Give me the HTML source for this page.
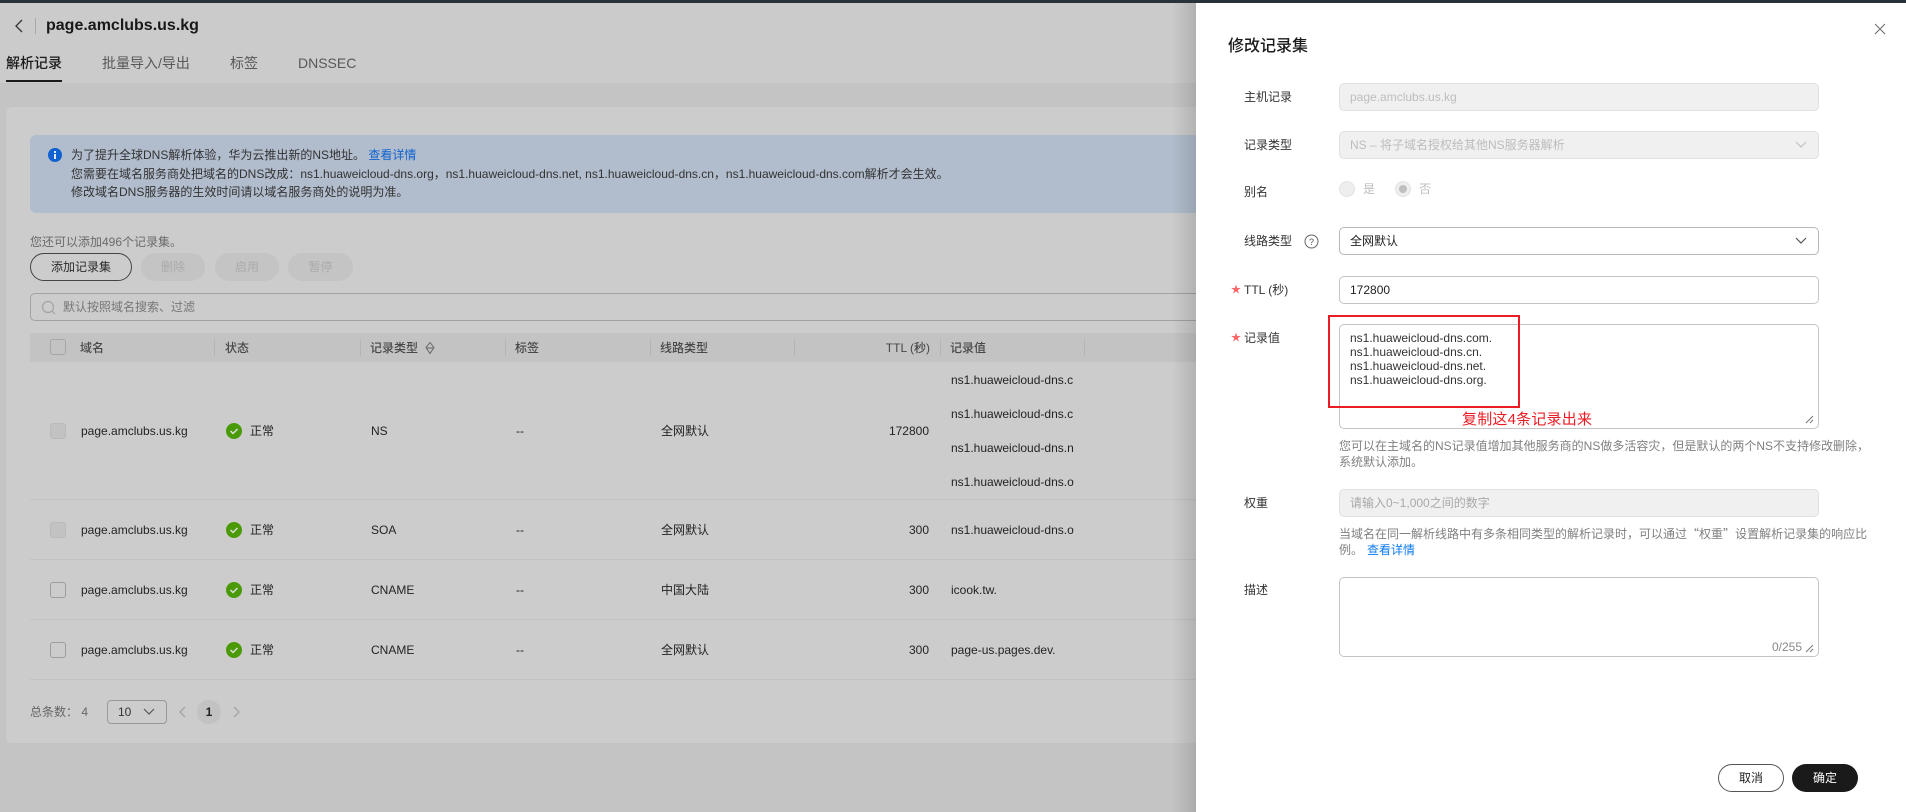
<!DOCTYPE html>
<html lang="zh"><head><meta charset="utf-8"><title>修改记录集</title>
<style>
html,body{margin:0;padding:0}
body{width:1906px;height:812px;position:relative;overflow:hidden;background:#c4c4c4;font:12px "Liberation Sans","Noto Sans CJK SC",sans-serif;color:#232323}
.a{position:absolute;box-sizing:border-box}
.t{position:absolute;white-space:nowrap;line-height:20px}
.h{color:#484848;font-weight:500}
.sep{position:absolute;top:339px;width:1px;height:17px;background:#b4b4b4}
.cb{position:absolute;left:50px;width:16px;height:16px;border:1px solid #9c9c9c;border-radius:3px;box-sizing:border-box}
.dis{background:#c2c2c2;border-color:#bababa}
.rl{position:absolute;left:30px;width:1166px;height:1px;background:#c2c2c2}
.st{position:absolute;left:226px;width:16px;height:16px}
.btn{position:absolute;top:253px;height:28px;border-radius:14px;background:#c4c4c4;color:#aaa;text-align:center;line-height:28px}
.l{color:#333}
.in{position:absolute;left:1339px;width:480px;border:1px solid #c2c2c2;border-radius:5px;box-sizing:border-box;background:#fff}
.off{background:#f0f0f0;border-color:#e0e0e0}
.help{color:#808080}
.rad{position:absolute;top:181px;width:16px;height:16px;border-radius:50%;background:#eee;border:1px solid #e3e3e3;box-sizing:border-box}
.star{position:absolute;left:1231px;white-space:nowrap;line-height:20px;font-size:10px;color:#f66}
.q{font-family:"Noto Sans CJK SC",sans-serif}
</style></head><body>
<div class="a" style="left:0;top:83px;width:1196px;height:24px;background:#c4c4c4"></div>
<div class="a" style="left:0;top:0;width:1196px;height:83px;background:#cbcbcb"></div>
<div class="a" style="left:0;top:0;width:1906px;height:3px;background:#29313a;z-index:9"></div>

<svg class="a" style="left:13px;top:18px" width="12" height="16" viewBox="0 0 12 16"><path d="M9 2L3 8l6 6" fill="none" stroke="#333" stroke-width="1.3"/></svg>
<div class="a" style="left:35px;top:18px;width:1px;height:16px;background:#a8a8a8"></div>
<div class="t" style="left:46px;top:16px;font-size:16px;font-weight:700;color:#191919">page.amclubs.us.kg</div>
<div class="t" style="left:6px;top:53px;font-size:14px;color:#1a1a1a;font-weight:500">解析记录</div>
<div class="t" style="left:102px;top:53px;font-size:14px;color:#585858">批量导入/导出</div>
<div class="t" style="left:230px;top:53px;font-size:14px;color:#585858">标签</div>
<div class="t" style="left:298px;top:53px;font-size:14px;color:#585858">DNSSEC</div>
<div class="a" style="left:6px;top:80px;width:56px;height:2px;background:#1a1a1a"></div>

<div class="a" style="left:6px;top:107px;width:1200px;height:636px;background:#cccccc;border-radius:6px"></div>
<div class="a" style="left:30px;top:135px;width:1170px;height:78px;background:#b1bccc;border-radius:6px"></div>
<svg class="a" style="left:48px;top:148px" width="14" height="14" viewBox="0 0 14 14"><circle cx="7" cy="7" r="7" fill="#0f62d0"/><rect x="6" y="6" width="2" height="5" fill="#dfe6f0"/><rect x="6" y="3" width="2" height="2" fill="#dfe6f0"/></svg>
<div class="t" style="left:71px;top:145px;color:#333">为了提升全球DNS解析体验，华为云推出新的NS地址。 <span style="color:#0f62d0">查看详情</span></div>
<div class="t" style="left:71px;top:164px;color:#333">您需要在域名服务商处把域名的DNS改成：ns1.huaweicloud-dns.org，ns1.huaweicloud-dns.net, ns1.huaweicloud-dns.cn，ns1.huaweicloud-dns.com解析才会生效。</div>
<div class="t" style="left:71px;top:182px;color:#333">修改域名DNS服务器的生效时间请以域名服务商处的说明为准。</div>

<div class="t" style="left:30px;top:232px;color:#6a6a6a">您还可以添加496个记录集。</div>
<div class="a" style="left:30px;top:253px;width:102px;height:28px;border:1px solid #444;border-radius:14px;text-align:center;line-height:26px;color:#2a2a2a">添加记录集</div>
<div class="btn" style="left:141px;width:64px">删除</div>
<div class="btn" style="left:215px;width:64px">启用</div>
<div class="btn" style="left:288px;width:65px">暂停</div>

<div class="a" style="left:30px;top:293px;width:1200px;height:28px;border:1px solid #a2a2a2;border-radius:5px"></div>
<svg class="a" style="left:41px;top:300px" width="16" height="16" viewBox="0 0 16 16"><circle cx="7" cy="7" r="5.500" fill="none" stroke="#a4a4a4" stroke-width="1.2"/><path d="M11 11l3 3" stroke="#a4a4a4" stroke-width="1.2"/></svg>
<div class="t" style="left:63px;top:297px;color:#777">默认按照域名搜索、过滤</div>

<div class="a" style="left:30px;top:333px;width:1166px;height:29px;background:#c3c3c3"></div>
<div class="cb" style="top:339px;border-color:#a6a6a6"></div>
<div class="t h" style="left:80px;top:338px">域名</div><div class="sep" style="left:214px"></div>
<div class="t h" style="left:225px;top:338px">状态</div><div class="sep" style="left:360px"></div>
<div class="t h" style="left:370px;top:338px">记录类型</div>
<svg class="a" style="left:424px;top:341px" width="12" height="14" viewBox="0 0 12 14"><path d="M6 1.500L10 6.500 6 12.500 2 6.500Z" fill="none" stroke="#666"/><path d="M3 7h6" stroke="#666"/></svg>
<div class="sep" style="left:505px"></div>
<div class="t h" style="left:515px;top:338px">标签</div><div class="sep" style="left:650px"></div>
<div class="t h" style="left:660px;top:338px">线路类型</div><div class="sep" style="left:794px"></div>
<div class="t h" style="right:976px;top:338px">TTL (秒)</div><div class="sep" style="left:940px"></div>
<div class="t h" style="left:950px;top:338px">记录值</div><div class="sep" style="left:1084px"></div>

<div class="rl" style="top:499px"></div><div class="rl" style="top:559px"></div><div class="rl" style="top:619px"></div><div class="rl" style="top:679px"></div>

<div class="cb dis" style="top:423px"></div><div class="cb dis" style="top:522px"></div><div class="cb" style="top:582px"></div><div class="cb" style="top:642px"></div>

<div class="t" style="left:81px;top:421px">page.amclubs.us.kg</div>
<svg class="st" style="top:423px" viewBox="0 0 16 16"><circle cx="8" cy="8" r="8" fill="#4a9a08"/><path d="M4.500 8l2.500 2.500 4.500-4.500" fill="none" stroke="#ddd" stroke-width="1.5"/></svg>
<div class="t" style="left:250px;top:421px">正常</div>
<div class="t" style="left:371px;top:421px">NS</div>
<div class="t" style="left:516px;top:421px">--</div>
<div class="t" style="left:661px;top:421px">全网默认</div>
<div class="t" style="right:977px;top:421px">172800</div>
<div class="t" style="left:951px;top:370px">ns1.huaweicloud-dns.c</div>
<div class="t" style="left:951px;top:404px">ns1.huaweicloud-dns.c</div>
<div class="t" style="left:951px;top:438px">ns1.huaweicloud-dns.n</div>
<div class="t" style="left:951px;top:472px">ns1.huaweicloud-dns.o</div>

<div class="t" style="left:81px;top:520px">page.amclubs.us.kg</div>
<svg class="st" style="top:522px" viewBox="0 0 16 16"><circle cx="8" cy="8" r="8" fill="#4a9a08"/><path d="M4.500 8l2.500 2.500 4.500-4.500" fill="none" stroke="#ddd" stroke-width="1.5"/></svg>
<div class="t" style="left:250px;top:520px">正常</div>
<div class="t" style="left:371px;top:520px">SOA</div>
<div class="t" style="left:516px;top:520px">--</div>
<div class="t" style="left:661px;top:520px">全网默认</div>
<div class="t" style="right:977px;top:520px">300</div>
<div class="t" style="left:951px;top:520px">ns1.huaweicloud-dns.o</div>

<div class="t" style="left:81px;top:580px">page.amclubs.us.kg</div>
<svg class="st" style="top:582px" viewBox="0 0 16 16"><circle cx="8" cy="8" r="8" fill="#4a9a08"/><path d="M4.500 8l2.500 2.500 4.500-4.500" fill="none" stroke="#ddd" stroke-width="1.5"/></svg>
<div class="t" style="left:250px;top:580px">正常</div>
<div class="t" style="left:371px;top:580px">CNAME</div>
<div class="t" style="left:516px;top:580px">--</div>
<div class="t" style="left:661px;top:580px">中国大陆</div>
<div class="t" style="right:977px;top:580px">300</div>
<div class="t" style="left:951px;top:580px">icook.tw.</div>

<div class="t" style="left:81px;top:640px">page.amclubs.us.kg</div>
<svg class="st" style="top:642px" viewBox="0 0 16 16"><circle cx="8" cy="8" r="8" fill="#4a9a08"/><path d="M4.500 8l2.500 2.500 4.500-4.500" fill="none" stroke="#ddd" stroke-width="1.5"/></svg>
<div class="t" style="left:250px;top:640px">正常</div>
<div class="t" style="left:371px;top:640px">CNAME</div>
<div class="t" style="left:516px;top:640px">--</div>
<div class="t" style="left:661px;top:640px">全网默认</div>
<div class="t" style="right:977px;top:640px">300</div>
<div class="t" style="left:951px;top:640px">page-us.pages.dev.</div>

<div class="t" style="left:30px;top:702px;color:#666">总条数： 4</div>
<div class="a" style="left:107px;top:700px;width:60px;height:24px;border:1px solid #999;border-radius:4px"></div>
<div class="t" style="left:118px;top:702px;color:#333">10</div>
<svg class="a" style="left:143px;top:707px" width="12" height="10" viewBox="0 0 12 10"><path d="M1 2l5 5 5-5" fill="none" stroke="#555" stroke-width="1.2"/></svg>
<svg class="a" style="left:178px;top:705px" width="9" height="14" viewBox="0 0 9 14"><path d="M7 2L2 7l5 5" fill="none" stroke="#a4a4a4" stroke-width="1.3"/></svg>
<div class="a" style="left:197px;top:700px;width:24px;height:24px;border-radius:12px;background:#c2c2c2;text-align:center;line-height:24px;color:#222;font-weight:700">1</div>
<svg class="a" style="left:232px;top:705px" width="9" height="14" viewBox="0 0 9 14"><path d="M2 2l5 5-5 5" fill="none" stroke="#a4a4a4" stroke-width="1.3"/></svg>

<div class="a" style="left:1172px;top:3px;width:24px;height:809px;background:linear-gradient(to right,rgba(0,0,0,0),rgba(0,0,0,.13))"></div>

<div class="a" style="left:1196px;top:3px;width:710px;height:809px;background:#fff"></div>

<div class="t" style="left:1228px;top:37px;font-size:16px;color:#1a1a1a;font-weight:500">修改记录集</div>
<svg class="a" style="left:1874px;top:23px" width="12" height="12" viewBox="0 0 12 12"><path d="M1 1l10 10M11 1L1 11" stroke="#777" stroke-width="1.2"/></svg>

<div class="t l" style="left:1244px;top:87px">主机记录</div>
<div class="in off" style="top:83px;height:28px"></div>
<div class="t" style="left:1350px;top:87px;color:#bdbdbd">page.amclubs.us.kg</div>

<div class="t l" style="left:1244px;top:135px">记录类型</div>
<div class="in off" style="top:131px;height:28px"></div>
<div class="t" style="left:1350px;top:135px;color:#bdbdbd">NS – 将子域名授权给其他NS服务器解析</div>
<svg class="a" style="left:1795px;top:140px" width="12" height="10" viewBox="0 0 12 10"><path d="M1 2l5 5 5-5" fill="none" stroke="#c0c0c0" stroke-width="1.2"/></svg>

<div class="t l" style="left:1244px;top:182px">别名</div>
<div class="rad" style="left:1339px"></div>
<div class="t" style="left:1363px;top:179px;color:#bdbdbd">是</div>
<div class="rad" style="left:1395px"></div>
<div class="a" style="left:1399px;top:185px;width:8px;height:8px;border-radius:50%;background:#bfbfbf"></div>
<div class="t" style="left:1419px;top:179px;color:#bdbdbd">否</div>

<div class="t l" style="left:1244px;top:231px">线路类型</div>
<svg class="a" style="left:1304px;top:234px" width="15" height="15" viewBox="0 0 15 15"><circle cx="7.500" cy="7.500" r="6.500" fill="none" stroke="#666"/><text x="7.500" y="11" text-anchor="middle" font-size="9" fill="#555" font-family="Liberation Sans">?</text></svg>
<div class="in" style="top:227px;height:28px;border-color:#b8b8b8"></div>
<div class="t" style="left:1350px;top:231px;color:#222">全网默认</div>
<svg class="a" style="left:1795px;top:236px" width="12" height="10" viewBox="0 0 12 10"><path d="M1 2l5 5 5-5" fill="none" stroke="#555" stroke-width="1.2"/></svg>

<div class="star" style="top:281px">★</div>
<div class="t l" style="left:1244px;top:280px">TTL (秒)</div>
<div class="in" style="top:276px;height:28px;border-color:#c4c4c4"></div>
<div class="t" style="left:1350px;top:280px;color:#222">172800</div>

<div class="star" style="top:329px">★</div>
<div class="t l" style="left:1244px;top:328px">记录值</div>
<div class="in" style="top:324px;height:105px;border-color:#c4c4c4"></div>
<div class="t" style="left:1350px;top:331px;line-height:14px;color:#333">ns1.huaweicloud-dns.com.<br>ns1.huaweicloud-dns.cn.<br>ns1.huaweicloud-dns.net.<br>ns1.huaweicloud-dns.org.</div>
<svg class="a" style="left:1805px;top:415px" width="9" height="9" viewBox="0 0 9 9"><path d="M1 8l7-7M5 8l3-3" stroke="#777"/></svg>
<div class="a" style="left:1328px;top:315px;width:192px;height:93px;border:2px solid #ec1c24"></div>
<div class="t" style="left:1462px;top:410px;font-size:15px;letter-spacing:.2px;color:#ec1c24">复制这4条记录出来</div>

<div class="t help" style="left:1339px;top:436px">您可以在主域名的NS记录值增加其他服务商的NS做多活容灾，但是默认的两个NS不支持修改删除，</div>
<div class="t help" style="left:1339px;top:452px">系统默认添加。</div>

<div class="t l" style="left:1244px;top:493px">权重</div>
<div class="in off" style="top:489px;height:28px"></div>
<div class="t" style="left:1350px;top:493px;color:#a8a8a8">请输入0~1,000之间的数字</div>
<div class="t help" style="left:1339px;top:524px">当域名在同一解析线路中有多条相同类型的解析记录时，可以通过<span class="q">“</span>权重<span class="q">”</span>设置解析记录集的响应比</div>
<div class="t help" style="left:1339px;top:540px">例。</div>
<div class="t" style="left:1367px;top:540px;color:#0f7bf0">查看详情</div>

<div class="t l" style="left:1244px;top:580px">描述</div>
<div class="in" style="top:577px;height:80px;border-color:#c4c4c4"></div>
<div class="t" style="left:1772px;top:637px;color:#888">0/255</div>
<svg class="a" style="left:1805px;top:644px" width="9" height="9" viewBox="0 0 9 9"><path d="M1 8l7-7M5 8l3-3" stroke="#777"/></svg>

<div class="a" style="left:1718px;top:764px;width:66px;height:28px;border:1px solid #555;border-radius:14px;text-align:center;line-height:26px;color:#222;background:#fff">取消</div>
<div class="a" style="left:1792px;top:764px;width:66px;height:28px;border-radius:14px;background:#1a1a1a;text-align:center;line-height:28px;color:#fff">确定</div>
</body></html>
